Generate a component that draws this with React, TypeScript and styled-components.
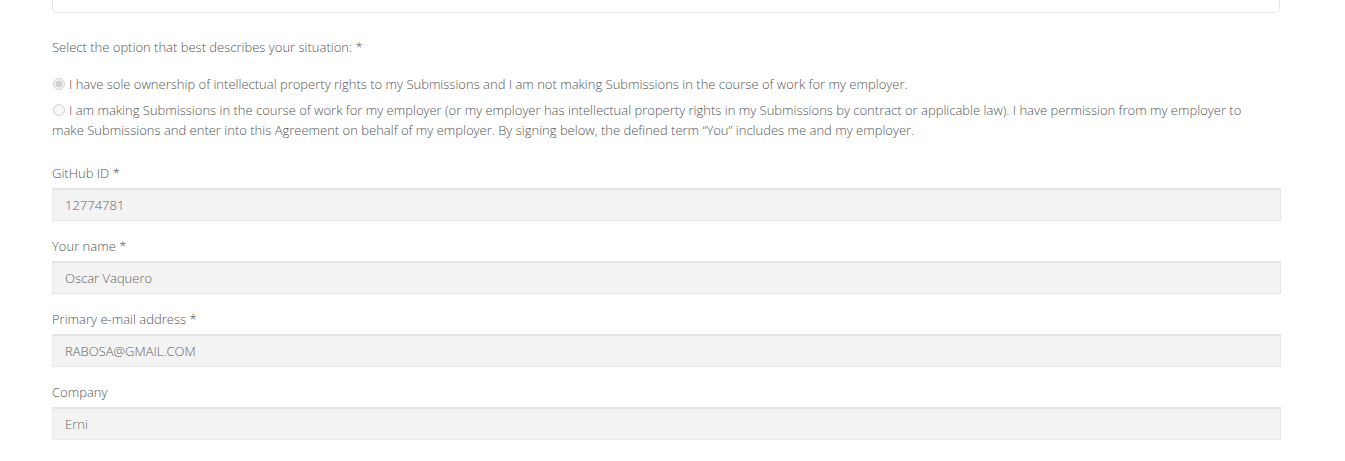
import React from "react";
import styled, { createGlobalStyle } from "styled-components";

const Global = createGlobalStyle`
  html, body { margin: 0; padding: 0; background: #fff; }
  body { font-family: "Open Sans", "Noto Sans", sans-serif; font-weight: 300; color: #555; }
`;

const Page = styled.div`
  padding: 0 64px 0 52px;
  width: 1229px;
  font-size: 13px;
  line-height: 20px;
`;

const Card = styled.div`
  height: 12px;
  border: 1px solid #e6e6e6;
  border-top: none;
  border-radius: 0 0 5px 5px;
  margin-right: 1px;
`;

const Question = styled.div`
  margin-top: 24px;
`;

const Options = styled.div`
  margin-top: 17px;
  display: flex;
  flex-direction: column;
  gap: 6px;
`;

const Option = styled.label`
  display: block;
  padding-right: 20px;
`;

const Radio = styled.input.attrs({ type: "radio" })`
  width: 12px;
  height: 12px;
  margin: 0 4px 0 1px;
  vertical-align: -1px;
`;

const Fields = styled.div`
  margin-top: 23px;
  display: flex;
  flex-direction: column;
  gap: 15px;
`;

const Field = styled.div`
  display: flex;
  flex-direction: column;
  gap: 5px;
`;

const Label = styled.div``;

const Input = styled.div`
  box-sizing: border-box;
  height: 33px;
  background: #f3f3f3;
  border: 1px solid #e8e8e8;
  border-top: 2px solid #e4e4e4;
  padding: 0 12px;
  display: flex;
  align-items: center;
  color: #666;
`;

const fields = [
  { label: "GitHub ID *", value: "12774781" },
  { label: "Your name *", value: "Oscar Vaquero" },
  { label: "Primary e-mail address *", value: "RABOSA@GMAIL.COM" },
  { label: "Company", value: "Erni" },
];

export default function App() {
  return (
    <Page>
      <Global />
      <Card />
      <Question>Select the option that best describes your situation: *</Question>
      <Options>
        <Option>
          <Radio name="sit" defaultChecked disabled />
          I have sole ownership of intellectual property rights to my Submissions and I am not making Submissions in the course of work for my employer.
        </Option>
        <Option>
          <Radio name="sit" disabled />
          I am making Submissions in the course of work for my employer (or my employer has intellectual property rights in my Submissions by contract or applicable law). I have permission from my employer to make Submissions and enter into this Agreement on behalf of my employer. By signing below, the defined term “You” includes me and my employer.
        </Option>
      </Options>
      <Fields>
        {fields.map((f) => (
          <Field key={f.label}>
            <Label>{f.label}</Label>
            <Input>{f.value}</Input>
          </Field>
        ))}
      </Fields>
    </Page>
  );
}
